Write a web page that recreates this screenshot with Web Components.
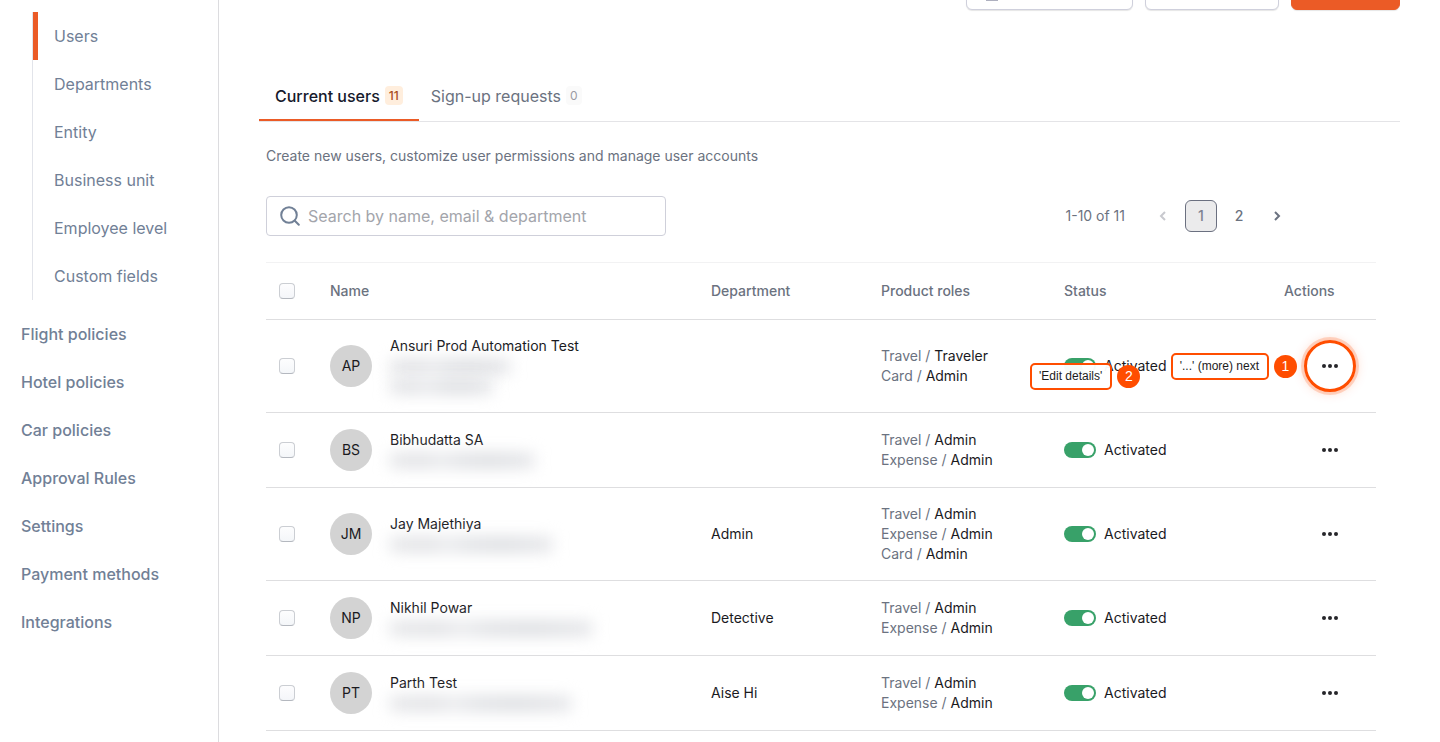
<!DOCTYPE html>
<html lang="en">
<head>
<meta charset="utf-8">
<meta name="viewport" content="width=device-width, initial-scale=1">
<title>Users</title>
<style>
  body {
    margin: 0;
    background: #fff;
    color: #1a1a1e;
    font-family: Inter, "Liberation Sans", sans-serif;
    font-size: 14px;
    line-height: 20px;
    --brand: #eb5b26;
    --muted: #6b7280;
    --nav: #718096;
    --guide: #ff4d00;
  }
</style>
</head>
<body>
<admin-layout>
  <side-nav slot="nav"></side-nav>
  <page-actions></page-actions>
  <user-tabs></user-tabs>
  <users-panel>
    <search-box slot="search"></search-box>
    <page-switcher slot="pages"></page-switcher>
    <user-table></user-table>
  </users-panel>
</admin-layout>

<script>
class BaseElement extends HTMLElement {
  constructor() {
    super();
    this.shadowDOM = this.attachShadow({mode: 'open'});
  }

  connectedCallback() {
    this.render();
  }
}

class AdminLayout extends BaseElement {
  render() {
    this.shadowDOM.innerHTML = `
      <style>
        :host {
          display: grid;
          grid-template-columns: 219px minmax(0, 1fr);
          min-height: 100vh;
        }
        main {
          padding: 0 40px;
        }
      </style>
      <slot name="nav"></slot>
      <main><slot></slot></main>
    `;
  }
}

class SideNav extends BaseElement {
  render() {
    const sub = ['Users', 'Departments', 'Entity', 'Business unit', 'Employee level', 'Custom fields'];
    const top = ['Flight policies', 'Hotel policies', 'Car policies', 'Approval Rules',
      'Settings', 'Payment methods', 'Integrations'];
    this.shadowDOM.innerHTML = `
      <style>
        :host {
          display: block;
          box-sizing: border-box;
          padding-top: 12px;
          border-right: 1px solid #dcdcdf;
          font-size: 16px;
        }
        ul {
          margin: 0;
          padding: 0;
          list-style: none;
        }
        .sub {
          margin: 0 0 10px 32px;
          border-left: 1px solid #e2e4ea;
        }
        a {
          display: block;
          line-height: 48px;
          color: var(--nav);
          text-decoration: none;
        }
        .sub a {
          padding-left: 16px;
          border-left: 5px solid transparent;
        }
        .sub a[aria-current] {
          border-color: var(--brand);
        }
        .top a {
          padding-left: 21px;
          font-weight: 500;
        }
      </style>
      <nav>
        <ul class="sub">
          ${sub.map((name, i) => `<li><a href="#"${i === 0 ? ' aria-current="page"' : ''}>${name}</a></li>`).join('')}
        </ul>
        <ul class="top">
          ${top.map(name => `<li><a href="#">${name}</a></li>`).join('')}
        </ul>
      </nav>
    `;
  }
}

/* only the lower edge of the buttons is in view, the rest is scrolled away */
class PageActions extends BaseElement {
  render() {
    this.shadowDOM.innerHTML = `
      <style>
        :host {
          display: flex;
          justify-content: flex-end;
          align-items: flex-end;
          gap: 12px;
          height: 12px;
          padding-bottom: 60px;
          overflow: hidden;
        }
        button {
          flex: none;
          box-sizing: border-box;
          height: 40px;
          margin-bottom: 2px;
          padding: 0 19px;
          border: 1px solid #cfd0dc;
          border-radius: 6px;
          background: #fff;
          box-shadow: 0 1px 1px rgba(0, 0, 0, 0.1);
          text-align: left;
        }
        svg {
          display: block;
        }
        .wide { width: 167px; }
        .mid { width: 134px; }
        .primary {
          width: 109px;
          border-color: var(--brand);
          background: var(--brand);
        }
      </style>
      <button class="wide" aria-label="Download">
        <svg width="12" height="22" viewBox="0 0 12 22" fill="none" stroke="#aeb0bf" stroke-width="2">
          <path d="M6 1v12M2 9l4 4 4-4M0 21h12"/>
        </svg>
      </button>
      <button class="mid" aria-label="Upload"></button>
      <button class="primary" aria-label="Add user"></button>
    `;
  }
}

class UserTabs extends BaseElement {
  render() {
    this.shadowDOM.innerHTML = `
      <style>
        :host {
          display: block;
          border-bottom: 1px solid #e4e4e7;
        }
        div {
          display: flex;
          gap: 12px;
        }
        button {
          display: flex;
          align-items: center;
          gap: 5px;
          height: 49px;
          padding: 0;
          border: 0;
          border-bottom: 2px solid transparent;
          background: none;
          color: var(--muted);
          font: 16px/24px Inter, "Liberation Sans", sans-serif;
        }
        button[aria-selected="true"] {
          padding: 0 16px;
          border-color: var(--brand);
          color: #16192b;
          font-weight: 500;
        }
        span {
          padding: 0 4px;
          border-radius: 4px;
          background: #fafafa;
          color: #9a9ba3;
          font-size: 12px;
          line-height: 19px;
        }
        [aria-selected="true"] span {
          background: #ffeedd;
          color: #a84a1c;
        }
      </style>
      <div role="tablist">
        <button role="tab" aria-selected="true">Current users <span>11</span></button>
        <button role="tab" aria-selected="false">Sign-up requests <span>0</span></button>
      </div>
    `;
  }
}

class UsersPanel extends BaseElement {
  render() {
    this.shadowDOM.innerHTML = `
      <style>
        :host {
          display: block;
          padding: 24px 24px 0 7px;
        }
        p {
          margin: 0 0 30px;
          color: var(--muted);
        }
        .tools {
          display: flex;
          justify-content: space-between;
          align-items: center;
          margin-bottom: 26px;
          padding-right: 83px;
        }
      </style>
      <p>Create new users, customize user permissions and manage user accounts</p>
      <div class="tools">
        <slot name="search"></slot>
        <slot name="pages"></slot>
      </div>
      <slot></slot>
    `;
  }
}

class SearchBox extends BaseElement {
  render() {
    this.shadowDOM.innerHTML = `
      <style>
        :host {
          display: block;
          width: 400px;
        }
        label {
          display: flex;
          align-items: center;
          gap: 8px;
          box-sizing: border-box;
          height: 40px;
          padding: 0 13px;
          border: 1px solid #cfd0da;
          border-radius: 4px;
        }
        svg {
          flex: none;
        }
        input {
          flex: 1;
          min-width: 0;
          padding: 0;
          border: 0;
          outline: 0;
          background: none;
          font: 16px/24px Inter, "Liberation Sans", sans-serif;
        }
        input::placeholder {
          color: #a3a5ab;
        }
      </style>
      <label>
        <svg width="20" height="20" viewBox="0 0 20 20" fill="none" stroke="#718096" stroke-width="2" stroke-linecap="round">
          <circle cx="9" cy="9" r="7.8"/>
          <path d="M14.8 14.8l4 4"/>
        </svg>
        <input type="text" aria-label="Search users" placeholder="Search by name, email &amp; department">
      </label>
    `;
  }
}

class PageSwitcher extends BaseElement {
  render() {
    this.shadowDOM.innerHTML = `
      <style>
        :host {
          display: flex;
          align-items: center;
          gap: 6px;
          color: var(--muted);
        }
        span {
          margin-right: 16px;
        }
        button {
          display: grid;
          place-items: center;
          width: 32px;
          height: 32px;
          padding: 0;
          border: 1px solid transparent;
          border-radius: 6px;
          background: none;
          color: inherit;
          font: 500 14px/20px Inter, "Liberation Sans", sans-serif;
        }
        button[aria-current] {
          border-color: #6b7080;
          background: #ebebec;
          color: #7d8190;
        }
        button:disabled {
          color: #c8c9ce;
        }
      </style>
      <span>1-10 of 11</span>
      <button disabled aria-label="Previous page">
        <svg width="8" height="10" viewBox="0 0 8 10" fill="none" stroke="currentColor" stroke-width="2"><path d="M6 1L2 5l4 4"/></svg>
      </button>
      <button aria-current="page">1</button>
      <button>2</button>
      <button aria-label="Next page">
        <svg width="8" height="10" viewBox="0 0 8 10" fill="none" stroke="currentColor" stroke-width="2"><path d="M2 1l4 4-4 4"/></svg>
      </button>
    `;
  }
}

class TickBox extends BaseElement {
  render() {
    this.shadowDOM.innerHTML = `
      <style>
        :host {
          display: block;
        }
        input {
          display: block;
          appearance: none;
          box-sizing: border-box;
          width: 16px;
          height: 16px;
          margin: 0;
          border: 1px solid #cbced3;
          border-bottom-color: #b4b8bf;
          border-radius: 4px;
          background: linear-gradient(#fdfdfe, #f4f6f9);
        }
      </style>
      <input type="checkbox" aria-label="${this.getAttribute('label')}">
    `;
  }
}

class UserAvatar extends BaseElement {
  render() {
    this.shadowDOM.innerHTML = `
      <style>
        :host {
          display: grid;
          place-items: center;
          flex: none;
          width: 42px;
          height: 42px;
          border-radius: 50%;
          background: #d3d3d3;
        }
      </style>
      <slot></slot>
    `;
  }
}

/* masked e-mail line */
class MaskedLine extends BaseElement {
  render() {
    this.shadowDOM.innerHTML = `
      <style>
        :host {
          display: flex;
          align-items: center;
          height: 20px;
        }
        i {
          width: ${this.getAttribute('size')}px;
          height: 13px;
          background: linear-gradient(90deg, #e0e1e4, #dadbdf 24%, #e6e7ea 35%, #dadce0 48%, #d5d7db 70%, #e0e1e5);
          filter: blur(8px);
        }
      </style>
      <i></i>
    `;
  }
}

class StatusToggle extends BaseElement {
  render() {
    this.shadowDOM.innerHTML = `
      <style>
        :host {
          display: block;
          position: relative;
        }
        label {
          display: flex;
          align-items: center;
          gap: 8px;
        }
        input {
          display: flex;
          justify-content: flex-end;
          appearance: none;
          box-sizing: border-box;
          width: 32px;
          height: 16px;
          margin: 0;
          padding: 2px;
          border-radius: 8px;
          background: #38a169;
        }
        input::before {
          content: "";
          width: 12px;
          height: 12px;
          border-radius: 50%;
          background: #fff;
        }
        ::slotted(guide-callout) {
          position: absolute;
          top: 7px;
          left: -34px;
        }
      </style>
      <label><input type="checkbox" role="switch" checked>Activated</label>
      <slot></slot>
    `;
  }
}

class MoreButton extends BaseElement {
  render() {
    this.shadowDOM.innerHTML = `
      <style>
        :host {
          display: block;
          position: relative;
          width: 32px;
          height: 32px;
          margin: 0 auto;
        }
        button {
          display: grid;
          place-items: center;
          width: 32px;
          height: 32px;
          padding: 0;
          border: 0;
          background: none;
        }
        :host([marked])::after {
          content: "";
          position: absolute;
          inset: -10px;
          border: 3px solid var(--guide);
          border-radius: 50%;
          box-shadow: 0 0 0 3px rgba(255, 77, 0, 0.2), 0 0 12px rgba(255, 77, 0, 0.25);
        }
        ::slotted(guide-callout) {
          position: absolute;
          top: 3px;
          right: calc(100% + 17px);
        }
      </style>
      <button aria-label="More actions">
        <svg width="16" height="4" viewBox="0 0 16 4" fill="#26262a">
          <circle cx="2" cy="2" r="2"/><circle cx="8" cy="2" r="2"/><circle cx="14" cy="2" r="2"/>
        </svg>
      </button>
      <slot></slot>
    `;
  }
}

class GuideCallout extends BaseElement {
  render() {
    this.shadowDOM.innerHTML = `
      <style>
        :host {
          display: flex;
          align-items: center;
          gap: 5px;
          z-index: 1;
          white-space: nowrap;
        }
        .label {
          padding: 0 8px 0 7px;
          border: 2px solid var(--guide);
          border-radius: 5px;
          background: rgba(255, 255, 255, 0.96);
          color: #1c1c1c;
          font: 12px/23px "Liberation Sans", Arial, sans-serif;
        }
        .step {
          width: 23px;
          border-radius: 50%;
          background: var(--guide);
          color: #fff;
          font: 14px/23px "Liberation Sans", Arial, sans-serif;
          text-align: center;
        }
      </style>
      <span class="label"><slot></slot></span>
      <span class="step">${this.getAttribute('step')}</span>
    `;
  }
}

class UserTable extends BaseElement {
  get users() {
    return [
      {name: 'Ansuri Prod Automation Test', initials: 'AP', mask: [120, 102], department: '',
        roles: [['Travel', 'Traveler'], ['Card', 'Admin']], guided: true},
      {name: 'Bibhudatta SA', initials: 'BS', mask: [144], department: '',
        roles: [['Travel', 'Admin'], ['Expense', 'Admin']]},
      {name: 'Jay Majethiya', initials: 'JM', mask: [162], department: 'Admin',
        roles: [['Travel', 'Admin'], ['Expense', 'Admin'], ['Card', 'Admin']]},
      {name: 'Nikhil Powar', initials: 'NP', mask: [202], department: 'Detective',
        roles: [['Travel', 'Admin'], ['Expense', 'Admin']]},
      {name: 'Parth Test', initials: 'PT', mask: [181], department: 'Aise Hi',
        roles: [['Travel', 'Admin'], ['Expense', 'Admin']]}
    ];
  }

  row(user) {
    return `
      <tr>
        <td class="pick"><tick-box label="Select ${user.name}"></tick-box></td>
        <td>
          <div class="person">
            <user-avatar>${user.initials}</user-avatar>
            <div>
              ${user.name}
              ${user.mask.map(size => `<masked-line size="${size}"></masked-line>`).join('')}
            </div>
          </div>
        </td>
        <td>${user.department}</td>
        <td>${user.roles.map(role => `<div><span>${role[0]} /</span> ${role[1]}</div>`).join('')}</td>
        <td><status-toggle>${user.guided ? `<guide-callout step="2">'Edit details'</guide-callout>` : ''}</status-toggle></td>
        <td><more-button${user.guided ? ' marked' : ''}>${user.guided ? `<guide-callout step="1">'...' (more) next</guide-callout>` : ''}</more-button></td>
      </tr>
    `;
  }

  render() {
    this.shadowDOM.innerHTML = `
      <style>
        :host {
          display: block;
        }
        table {
          width: 100%;
          table-layout: fixed;
          border-spacing: 0;
          border-top: 1px solid #f2f2f3;
        }
        .c-pick { width: 48px; }
        .c-department { width: 170px; }
        .c-roles { width: 183px; }
        .c-status { width: 220px; }
        .c-actions { width: 108px; }
        th, td {
          padding: 16px 0 16px 16px;
          border-bottom: 1px solid #dedee0;
          text-align: left;
          vertical-align: middle;
        }
        th {
          padding-top: 18px;
          padding-bottom: 18px;
          color: var(--muted);
          font-weight: 500;
        }
        .pick {
          padding-left: 13px;
        }
        .person {
          display: flex;
          align-items: center;
          gap: 18px;
        }
        span {
          color: var(--muted);
        }
      </style>
      <table>
        <colgroup>
          <col class="c-pick"><col><col class="c-department"><col class="c-roles"><col class="c-status"><col class="c-actions">
        </colgroup>
        <thead>
          <tr>
            <th class="pick"><tick-box label="Select all users"></tick-box></th>
            <th>Name</th>
            <th>Department</th>
            <th>Product roles</th>
            <th>Status</th>
            <th>Actions</th>
          </tr>
        </thead>
        <tbody>${this.users.map(user => this.row(user)).join('')}</tbody>
      </table>
    `;
  }
}

customElements.define('admin-layout', AdminLayout);
customElements.define('side-nav', SideNav);
customElements.define('page-actions', PageActions);
customElements.define('user-tabs', UserTabs);
customElements.define('users-panel', UsersPanel);
customElements.define('search-box', SearchBox);
customElements.define('page-switcher', PageSwitcher);
customElements.define('tick-box', TickBox);
customElements.define('user-avatar', UserAvatar);
customElements.define('masked-line', MaskedLine);
customElements.define('status-toggle', StatusToggle);
customElements.define('more-button', MoreButton);
customElements.define('guide-callout', GuideCallout);
customElements.define('user-table', UserTable);
</script>
</body>
</html>
